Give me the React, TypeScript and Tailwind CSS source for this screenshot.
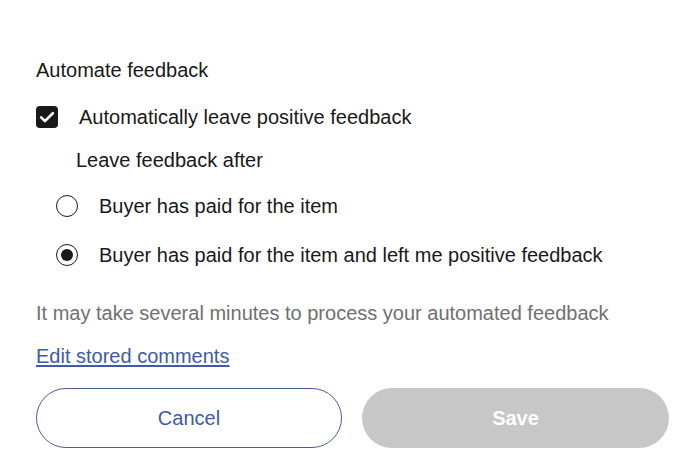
export default function App() {
  return (
    <div className="w-[692px] h-[474px] bg-white font-['Liberation_Sans',Arial,sans-serif] text-[20px] text-[#191919] pl-9 pr-[23px] pt-[58px]">
      <div className="leading-[24px]">Automate feedback</div>

      <label className="mt-[23px] flex items-center gap-[21px] leading-[24px]">
        <span className="w-[22px] h-[22px] rounded-[4px] bg-[#191919] flex items-center justify-center shrink-0">
          <svg width="20" height="20" viewBox="0 0 24 24" fill="none" stroke="white" strokeWidth="3.2" strokeLinecap="round" strokeLinejoin="round">
            <path d="M5 12.5l4.5 4.5L19 7.5" />
          </svg>
        </span>
        <span>Automatically leave positive feedback</span>
      </label>

      <div className="mt-[19px] pl-10 leading-[24px]">Leave feedback after</div>

      <div className="mt-[22px] pl-5 flex flex-col gap-[25px]">
        <label className="flex items-center gap-[21px] leading-[24px]">
          <span className="w-[22px] h-[22px] rounded-full border-[1.5px] border-[#191919] shrink-0" />
          <span>Buyer has paid for the item</span>
        </label>
        <label className="flex items-center gap-[21px] leading-[24px]">
          <span className="w-[22px] h-[22px] rounded-full border-[1.5px] border-[#191919] flex items-center justify-center shrink-0">
            <span className="w-[12px] h-[12px] rounded-full bg-[#191919]" />
          </span>
          <span>Buyer has paid for the item and left me positive feedback</span>
        </label>
      </div>

      <p className="mt-[34px] leading-[24px] text-[#707070]">
        It may take several minutes to process your automated feedback
      </p>

      <a href="#" className="mt-[19px] inline-block leading-[24px] text-[#3e5aa8] underline underline-offset-2">
        Edit stored comments
      </a>

      <div className="mt-[17px] flex gap-5">
        <button className="w-[306px] h-[60px] rounded-full border border-[#4b5c99] text-[#3e5aa8] text-[20px]">
          Cancel
        </button>
        <button className="w-[307px] h-[60px] rounded-full bg-[#c7c7c7] text-white font-bold text-[20px]">
          Save
        </button>
      </div>
    </div>
  );
}
